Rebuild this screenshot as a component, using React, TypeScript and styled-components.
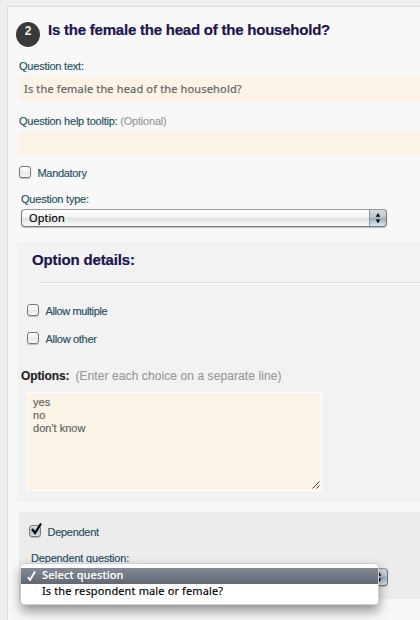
import React from "react";
import styled, { createGlobalStyle } from "styled-components";

const GlobalStyle = createGlobalStyle`
  * { box-sizing: border-box; }
  html, body { margin: 0; background: #efefef; overflow: hidden; }
`;

const sans = `"Liberation Sans", Arial, sans-serif`;
const humanist = `"Noto Sans", "Open Sans", sans-serif`;

const Page = styled.div`
  width: 420px;
  height: 620px;
  padding: 6px 0 0 7px;
  overflow: hidden;
  font-family: ${sans};
`;

const Card = styled.main`
  height: 614px;
  border: 1px solid #dcdcdc;
  border-width: 1px 0 0 1px;
  background: #f8f8f8;
`;

const Header = styled.header`
  display: flex;
  height: 52px;
  padding: 15px 0 0 8px;
`;

const NumberBadge = styled.span`
  width: 24px;
  height: 25px;
  border-radius: 50%;
  background: #3a3a3a;
  box-shadow: 0 1px 1px #fff;
  color: #eee;
  font: bold 12px/18px ${sans};
  text-align: center;
`;

const Heading = styled.h1<{ $spacing: number }>`
  margin: 0;
  color: #20144f;
  font: bold 15px/18px ${sans};
  letter-spacing: ${(p) => p.$spacing}px;
  -webkit-text-stroke: 0.2px #20144f;
  white-space: nowrap;
`;

const Title = styled(Heading)`
  margin: -1px 0 0 8px;
`;

const Label = styled.label<{ $spacing?: number }>`
  display: block;
  height: 14px;
  color: #24505f;
  font: 11px/14px ${sans};
  letter-spacing: ${(p) => p.$spacing ?? -0.22}px;
  -webkit-text-stroke: 0.15px currentColor;
  white-space: nowrap;
`;

const Optional = styled.span`
  color: #999;
`;

const Field = styled.div`
  height: 25px;
  padding: 5px 0 0 5px;
  background: #faf3e6;
  color: #666;
  font: 11px/16px ${humanist};
  letter-spacing: 0.16px;
  -webkit-text-stroke: 0.2px currentColor;
  white-space: nowrap;
`;

const Questions = styled.section`
  padding-left: 11px;
`;

const FieldGroup = styled.div<{ $height: number }>`
  display: flex;
  flex-direction: column;
  gap: 3px;
  height: ${(p) => p.$height}px;
`;

const CheckRow = styled.div<{ $height: number }>`
  display: flex;
  gap: 6.5px;
  height: ${(p) => p.$height}px;
`;

const Box = styled.span<{ $on?: boolean }>`
  flex: none;
  width: 12px;
  height: 12px;
  border: 1px solid #777;
  border-radius: 3px;
  background: ${(p) =>
    p.$on
      ? "linear-gradient(#dbe3ea, #b4c1cd 50%, #d3e2ee)"
      : "linear-gradient(#fff, #f3f3f3 45%, #e4e4e4 50%, #fafafa)"};
  box-shadow: 0 1px 1px #bbb;
`;

const Tick = styled.svg`
  display: block;
  margin: -3px 0 0 0;
  overflow: visible;
`;

const TypeGroup = styled.div`
  height: 50px;
  padding-left: 2px;
`;

const SelectBox = styled.div`
  display: flex;
  width: 366px;
  height: 18px;
  border: 1px solid #777;
  border-top-color: #999;
  border-radius: 4px;
  overflow: hidden;
  background: linear-gradient(#fff, #f4f4f4 45%, #e2e2e2 52%, #fafafa);
  box-shadow: 0 1px 1px #bbb;
  color: #000;
  font: 11px/16px ${humanist};
`;

const SelectText = styled.span`
  flex: 1;
  padding-left: 7px;
  letter-spacing: 0.05px;
  -webkit-text-stroke: 0.15px currentColor;
`;

const Stepper = styled.span`
  width: 18px;
  height: 18px;
  margin: -1px -1px 0 0;
  border: 1px solid #4a4c68;
  border-left-color: #8b929c;
  border-radius: 0 4px 4px 0;
  background: linear-gradient(#d4dce4, #bcc8d2 45%, #9cabb8 52%, #d8e8f6);
`;

const Arrows = styled.svg`
  display: block;
`;

const Select = ({ text }: { text?: string }) => (
  <SelectBox>
    <SelectText>{text}</SelectText>
    <Stepper>
      <Arrows width="16" height="16" viewBox="0 0 16 16">
        <path d="M8 3L10.3 6.8H5.7ZM8 13.2L10.3 9.4H5.7Z" fill="#000" />
      </Arrows>
    </Stepper>
  </SelectBox>
);

const TypeSelect = styled.div`
  margin-top: 3px;
`;

const Details = styled.section`
  height: 260px;
  margin-left: 9px;
  background: #f2f2f2;
`;

const DetailsTop = styled.div`
  height: 40px;
  padding: 9px 0 0 15px;
`;

const Rule = styled.hr`
  height: 2px;
  margin: 0 0 0 23px;
  border: 0;
  border-top: 1px solid #ddd;
  border-bottom: 1px solid #fff;
`;

const Checks = styled.div`
  height: 84px;
  padding: 20px 0 0 10px;
`;

const OptionsLine = styled.div`
  display: flex;
  gap: 6px;
  height: 24px;
  padding: 0 0 0 4px;
  color: #222;
  font: 12px/16px ${sans};
  letter-spacing: -0.12px;
  -webkit-text-stroke: 0.15px currentColor;
  white-space: nowrap;
`;

const Hint = styled.span`
  color: #999;
  letter-spacing: 0.09px;
`;

const TextArea = styled.div`
  display: flex;
  justify-content: space-between;
  align-items: flex-end;
  width: 295px;
  height: 99px;
  margin-left: 10px;
  padding: 3px 1px 1px 5px;
  border: 1px solid #fff;
  background: #faf3e6;
`;

const Lines = styled.div`
  align-self: flex-start;
  color: #666;
  font: 11px/13px ${sans};
  letter-spacing: 0.02px;
  -webkit-text-stroke: 0.2px currentColor;
  white-space: pre;
`;

const Dependent = styled.section`
  height: 87px;
  margin: 10px 0 0 11px;
  padding: 13px 0 0 10px;
  background: #ececec;
`;

const DependentBody = styled.div`
  padding-left: 2px;
`;

const PickerAnchor = styled.div`
  position: relative;
  width: 367px;
  margin: 3px 0 0 -10px;
  padding-left: 1px;
`;

const Menu = styled.ul`
  position: absolute;
  top: -5px;
  left: 0;
  width: 358px;
  height: 42px;
  margin: 0;
  padding: 4px 0;
  border: 1px solid #cfcfcf;
  border-width: 1px 1px 1px 0;
  border-radius: 4px;
  background: #fff;
  box-shadow: 0 6px 12px rgba(0, 0, 0, 0.42);
  list-style: none;
`;

const MenuItem = styled.li<{ $active?: boolean }>`
  display: flex;
  height: 16px;
  background: ${(p) => (p.$active ? "linear-gradient(#838b97, #5f6873)" : "none")};
  color: ${(p) => (p.$active ? "#fff" : "#000")};
  font: ${(p) => (p.$active ? 500 : 400)} 11px/14px ${humanist};
  letter-spacing: ${(p) => (p.$active ? 0.08 : 0.13)}px;
  -webkit-text-stroke: 0.15px currentColor;
  white-space: nowrap;
`;

const MenuMark = styled.span`
  width: 21px;
  padding: 3px 0 0 6px;
  line-height: 0;
`;

const App = () => (
  <Page>
    <GlobalStyle />
    <Card>
      <Header>
        <NumberBadge>2</NumberBadge>
        <Title $spacing={-0.22}>Is the female the head of the household?</Title>
      </Header>
      <Questions>
        <FieldGroup $height={55}>
          <Label>Question text:</Label>
          <Field>Is the female the head of the household?</Field>
        </FieldGroup>
        <FieldGroup $height={52}>
          <Label>
            Question help tooltip: <Optional>(Optional)</Optional>
          </Label>
          <Field />
        </FieldGroup>
        <CheckRow $height={26}>
          <Box />
          <Label $spacing={-0.32}>Mandatory</Label>
        </CheckRow>
        <TypeGroup>
          <Label>Question type:</Label>
          <TypeSelect>
            <Select text="Option" />
          </TypeSelect>
        </TypeGroup>
      </Questions>
      <Details>
        <DetailsTop>
          <Heading as="h2" $spacing={-0.14}>Option details:</Heading>
        </DetailsTop>
        <Rule />
        <Checks>
          <CheckRow $height={28}>
            <Box />
            <Label $spacing={-0.4}>Allow multiple</Label>
          </CheckRow>
          <CheckRow $height={28}>
            <Box />
            <Label $spacing={-0.3}>Allow other</Label>
          </CheckRow>
        </Checks>
        <OptionsLine>
          <b>Options:</b>
          <Hint>(Enter each choice on a separate line)</Hint>
        </OptionsLine>
        <TextArea>
          <Lines>{"yes\nno\ndon't know"}</Lines>
          <svg width="8" height="8" viewBox="0 0 8 8" stroke="#444" strokeWidth="1">
            <path d="M0.5 7.5L7.5 0.5M4.5 7.5L7.5 4.5" />
          </svg>
        </TextArea>
      </Details>
      <Dependent>
        <CheckRow $height={26}>
          <Box $on>
            <Tick width="12" height="13" viewBox="0 0 12 13" fill="none" stroke="#000">
              <path d="M2 6L5 10L11 0.5" strokeWidth="2.2" />
            </Tick>
          </Box>
          <Label $spacing={-0.28}>Dependent</Label>
        </CheckRow>
        <DependentBody>
          <Label $spacing={-0.18}>Dependent question:</Label>
          <PickerAnchor>
            <Select />
            <Menu>
              <MenuItem $active>
                <MenuMark>
                  <svg width="9" height="10" viewBox="0 0 9 10" fill="none" stroke="#fff" strokeWidth="1.8">
                    <path d="M0.8 6L3 9L8 0.5" />
                  </svg>
                </MenuMark>
                Select question
              </MenuItem>
              <MenuItem>
                <MenuMark />
                Is the respondent male or female?
              </MenuItem>
            </Menu>
          </PickerAnchor>
        </DependentBody>
      </Dependent>
    </Card>
  </Page>
);

export default App;
